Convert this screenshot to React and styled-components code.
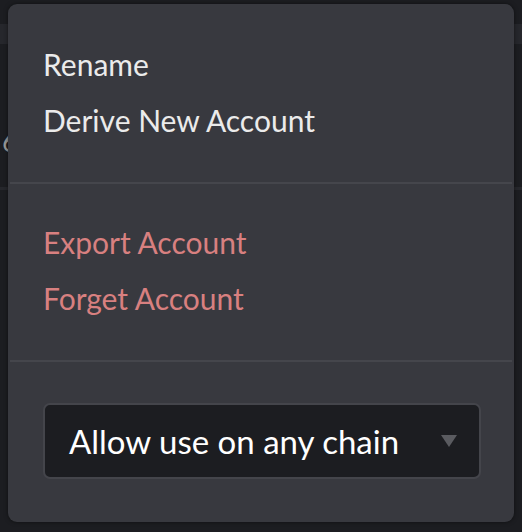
import React from "react";
import styled, { createGlobalStyle } from "styled-components";

const GlobalStyle = createGlobalStyle`
    html, body {
        margin: 0;
        padding: 0;
        background: #1c1d21;
        font-family: "Lato", "Noto Sans", sans-serif;
    }
`;

const Page = styled.div`
    position: relative;
    width: 522px;
    height: 532px;
    overflow: hidden;
    background: #1c1d21;
`;

const TopBar = styled.div`
    height: 20px;
    margin-top: 24px;
    background: #26272c;
`;

const AccountRow = styled.div`
    height: 93px;
    padding-top: 50px;
    border-bottom: 3px solid #26272c;
    display: flex;
    align-items: center;
    color: #9a9a9a;
    font-size: 28px;
    padding-left: 2px;
`;

const Menu = styled.div`
    position: absolute;
    top: 4px;
    left: 8px;
    width: 506px;
    height: 518px;
    box-sizing: border-box;
    background: #38393f;
    border-radius: 9px;
    box-shadow: 0 0 4px rgba(0, 0, 0, 0.5);
    display: flex;
    flex-direction: column;
`;

const Section = styled.div`
    padding: ${(p) => p.$pad};
    display: flex;
    flex-direction: column;
`;

const Divider = styled.div`
    height: 2px;
    margin: 0 2px;
    background: #45464c;
`;

const Item = styled.div`
    height: 56px;
    display: flex;
    align-items: center;
    font-size: 30px;
    color: ${(p) => (p.$danger ? "#d88080" : "#ebebeb")};
    cursor: pointer;
`;

const Select = styled.div`
    height: 76px;
    box-sizing: border-box;
    border: 2px solid #44454b;
    border-radius: 7px;
    background: #1c1d21;
    display: flex;
    align-items: center;
    justify-content: space-between;
    padding: 0 22px 0 24px;
    color: #ffffff;
    font-size: 33px;
`;

const Caret = styled.span`
    width: 0;
    height: 0;
    border-left: 8px solid transparent;
    border-right: 8px solid transparent;
    border-top: 12px solid #5a5b60;
`;

export default function App() {
    return (
        <>
            <GlobalStyle />
            <Page>
                <TopBar />
                <AccountRow>6</AccountRow>
                <Menu>
                    <Section $pad="32px 35px 34px">
                        <Item>Rename</Item>
                        <Item>Derive New Account</Item>
                    </Section>
                    <Divider />
                    <Section $pad="30px 35px 34px">
                        <Item $danger>Export Account</Item>
                        <Item $danger>Forget Account</Item>
                    </Section>
                    <Divider />
                    <Section $pad="41px 33px 0 35px">
                        <Select>
                            <span>Allow use on any chain</span>
                            <Caret />
                        </Select>
                    </Section>
                </Menu>
            </Page>
        </>
    );
}
